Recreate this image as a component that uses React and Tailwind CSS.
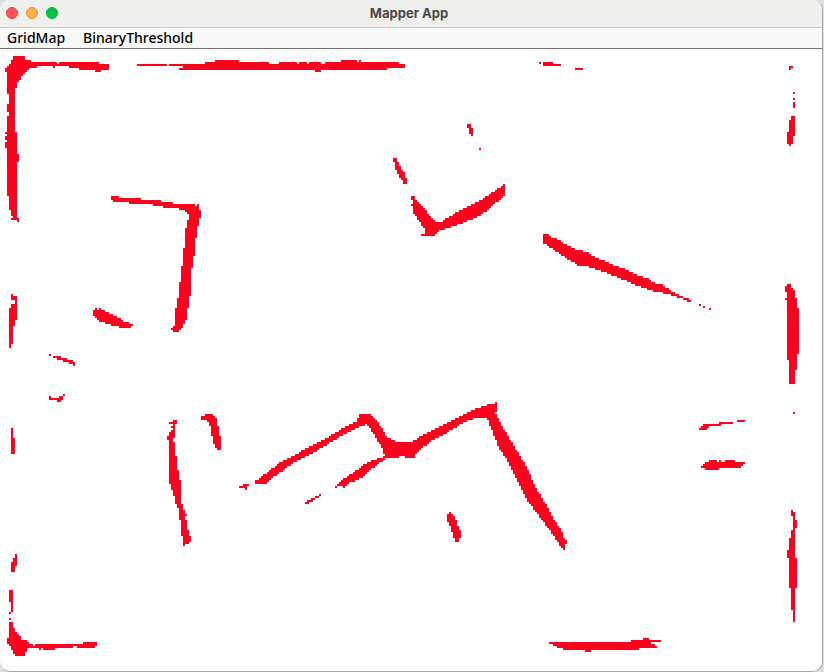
import React from "react";

const CELL = 2;
const ORIGIN_X = 1;
const ORIGIN_Y = 50;

const SPANS = [
  // north-west corner and west wall
  [56, 60, 13, 25], [60, 62, 11, 31], [62, 64, 11, 57], [62, 64, 59, 99], [64, 66, 9, 109],
  [66, 68, 7, 37], [66, 68, 53, 55], [66, 68, 69, 109], [68, 70, 5, 29], [68, 70, 79, 109],
  [70, 72, 5, 27], [70, 72, 95, 101], [72, 74, 7, 25], [74, 76, 7, 23], [76, 80, 7, 21],
  [80, 82, 7, 19], [82, 88, 7, 17], [88, 94, 7, 15], [94, 104, 9, 15], [104, 112, 7, 15],
  [112, 116, 9, 15], [116, 132, 7, 15], [132, 196, 7, 17], [132, 134, 5, 7], [136, 140, 5, 7],
  [142, 148, 5, 7], [154, 162, 17, 19], [196, 210, 9, 17], [210, 216, 11, 17],
  [216, 218, 13, 17], [218, 220, 11, 19], [220, 222, 17, 19],
  // north wall
  [64, 66, 137, 167], [60, 62, 215, 239], [60, 62, 341, 357], [60, 62, 359, 361],
  [62, 64, 205, 269], [62, 64, 279, 297], [62, 64, 299, 307], [62, 64, 309, 321],
  [62, 64, 325, 399], [64, 66, 169, 405], [66, 68, 183, 405], [68, 70, 179, 387],
  [70, 72, 315, 321], [62, 64, 539, 541], [62, 64, 543, 553], [64, 66, 543, 561],
  [68, 70, 575, 583], [66, 68, 789, 793], [68, 70, 789, 791],
  // upper centre fragments
  [124, 128, 467, 471], [128, 134, 469, 473], [134, 136, 471, 473], [148, 150, 479, 481],
  [158, 162, 393, 397], [162, 166, 395, 399], [166, 170, 395, 401], [170, 172, 397, 403],
  [172, 174, 397, 405], [174, 178, 399, 405], [178, 180, 401, 405], [178, 184, 403, 407],
  [204, 206, 411, 415],
  // tip of the long diagonal
  [290, 294, 663, 671], [292, 294, 665, 675], [294, 296, 671, 679], [296, 298, 677, 683],
  [298, 300, 683, 689], [300, 302, 687, 691], [304, 306, 699, 701], [306, 308, 703, 705],
  [308, 310, 709, 711],
  // east wall, upper part
  [92, 94, 793, 795], [98, 100, 793, 795], [102, 108, 793, 795], [116, 120, 791, 795],
  [120, 132, 789, 795], [132, 136, 787, 795], [136, 144, 787, 793], [144, 146, 789, 791],
  [284, 286, 787, 791], [286, 288, 785, 791], [288, 290, 785, 793], [290, 292, 785, 795],
  [292, 298, 787, 795], [298, 300, 785, 797], [300, 308, 787, 797], [308, 354, 787, 799],
  [354, 360, 787, 797], [360, 370, 789, 797], [370, 384, 789, 795],
  // box corner on the left
  [196, 198, 111, 119], [198, 200, 111, 141], [200, 202, 113, 161], [202, 204, 129, 173],
  [204, 206, 153, 195], [204, 206, 197, 199], [206, 208, 163, 199], [208, 210, 179, 199],
  [210, 212, 185, 201], [212, 214, 187, 201], [214, 218, 189, 201], [218, 220, 189, 199],
  [220, 226, 187, 199], [226, 228, 187, 197], [228, 238, 185, 197], [238, 248, 185, 195],
  [248, 256, 183, 195], [256, 266, 183, 193], [266, 268, 181, 193], [268, 282, 181, 191],
  [282, 296, 179, 191], [296, 298, 179, 189], [298, 308, 177, 189], [308, 320, 175, 187],
  [320, 324, 175, 185], [324, 326, 175, 183], [326, 328, 173, 183], [328, 330, 171, 181],
  [330, 332, 173, 179],
  // west wall, middle
  [294, 296, 11, 13], [296, 300, 11, 17], [300, 304, 15, 17], [304, 308, 11, 17],
  [308, 320, 9, 17], [320, 326, 9, 15], [326, 344, 9, 13], [344, 348, 9, 11],
  [308, 310, 95, 97], [308, 310, 99, 101], [310, 312, 93, 105], [312, 314, 93, 109],
  [314, 316, 93, 113], [316, 318, 95, 117], [318, 320, 97, 121], [320, 322, 99, 123],
  [322, 324, 105, 129], [324, 326, 111, 133], [326, 328, 119, 131],
  [354, 356, 49, 51], [356, 358, 53, 61], [358, 360, 57, 67], [360, 362, 63, 73],
  [362, 364, 69, 75], [364, 366, 73, 75], [394, 396, 63, 65], [396, 398, 49, 51],
  [396, 398, 59, 63], [398, 400, 49, 63], [400, 402, 57, 61],
  // lower left strokes
  [420, 422, 173, 177], [422, 424, 169, 177], [424, 426, 173, 175], [426, 428, 171, 175],
  [428, 430, 173, 175], [430, 432, 171, 175], [432, 436, 169, 175], [436, 438, 167, 175],
  [438, 440, 167, 173], [440, 442, 169, 173], [442, 456, 169, 175], [456, 470, 169, 177],
  [470, 480, 169, 179], [480, 484, 169, 181], [484, 490, 171, 181], [490, 496, 173, 181],
  [496, 502, 175, 181], [502, 504, 175, 181], [504, 508, 177, 183], [508, 510, 179, 183],
  [510, 514, 179, 185], [514, 516, 179, 187], [516, 520, 179, 185], [520, 530, 181, 187],
  [530, 536, 181, 189], [536, 542, 183, 191], [542, 544, 183, 189], [544, 546, 183, 185],
  [414, 416, 205, 213], [416, 418, 201, 215], [418, 420, 201, 217], [420, 422, 207, 217],
  [422, 426, 209, 217], [426, 436, 211, 219], [436, 444, 213, 221], [444, 448, 215, 221],
  [448, 450, 217, 221], [484, 486, 243, 249], [486, 488, 239, 247], [488, 490, 245, 247],
  [494, 496, 319, 321], [496, 498, 315, 319], [498, 500, 311, 315], [500, 502, 307, 313],
  [502, 504, 305, 309], [486, 488, 335, 337], [486, 488, 343, 345],
  [512, 514, 449, 451], [514, 516, 447, 453], [516, 520, 447, 455], [520, 522, 447, 457],
  [522, 526, 449, 457], [526, 530, 451, 459], [530, 532, 451, 461], [532, 538, 453, 461],
  [538, 540, 455, 459], [540, 542, 455, 459],
  // east wall, lower part
  [420, 422, 737, 745], [422, 424, 719, 733], [424, 426, 703, 721], [426, 428, 701, 709],
  [428, 430, 699, 707], [412, 414, 793, 795], [460, 462, 709, 717], [460, 462, 719, 721],
  [460, 462, 725, 735], [462, 464, 705, 745], [464, 466, 703, 743], [466, 468, 701, 741],
  [468, 470, 705, 719], [510, 512, 791, 793], [512, 516, 791, 795], [516, 520, 793, 795],
  [520, 528, 793, 797], [528, 530, 793, 795], [530, 538, 791, 795], [538, 550, 789, 795],
  [550, 558, 787, 795], [558, 588, 789, 797], [588, 610, 791, 795], [610, 622, 793, 795],
  // south-west corner
  [428, 438, 11, 13], [438, 454, 11, 15], [554, 558, 15, 17], [558, 562, 13, 17],
  [562, 566, 11, 17], [566, 572, 11, 15], [590, 602, 9, 13], [602, 612, 11, 13],
  [612, 614, 9, 11], [618, 620, 9, 11], [622, 628, 9, 13], [628, 632, 9, 15],
  [632, 634, 9, 17], [634, 636, 9, 19], [636, 638, 9, 21], [638, 640, 7, 21],
  [640, 642, 7, 27], [642, 644, 7, 29], [642, 644, 83, 97], [644, 646, 9, 33],
  [644, 646, 35, 97], [646, 648, 11, 73], [646, 648, 77, 95], [648, 650, 11, 27],
  [648, 650, 39, 41], [648, 650, 43, 55], [650, 652, 13, 27], [652, 654, 13, 25],
  [654, 656, 15, 25],
  // south wall
  [638, 640, 643, 649], [640, 642, 631, 661], [642, 644, 549, 651], [644, 646, 553, 655],
  [646, 648, 557, 657], [648, 650, 563, 639], [650, 652, 585, 591],
];

// Slanted walls, stored as outlines and sampled onto the grid
const OUTLINES = [
  [[411, 196], [415, 196], [416, 200], [427, 212], [435, 222], [441, 222], [461, 210], [480, 201], [505, 184], [505, 194], [502, 198], [480, 216], [463, 223], [441, 230], [434, 236], [421, 236], [421, 234], [424, 234], [424, 228], [413, 212], [413, 202], [411, 200]],
  [[543, 234], [549, 234], [551, 237], [557, 239], [563, 243], [569, 246], [575, 249], [582, 251], [588, 253], [597, 258], [607, 262], [615, 266], [627, 270], [637, 275], [647, 278], [655, 283], [663, 285], [672, 292], [655, 292], [643, 288], [633, 284], [619, 278], [609, 274], [595, 269], [589, 267], [579, 266], [571, 261], [560, 254], [543, 243]],
  [[255, 482], [257, 480], [265, 474], [273, 468], [281, 462], [291, 457], [300, 452], [320, 442], [340, 430], [357, 421], [359, 416], [361, 414], [369, 414], [374, 418], [382, 428], [387, 437], [395, 441], [402, 443], [411, 442], [420, 437], [440, 427], [460, 417], [475, 409], [487, 405], [495, 404], [495, 402], [497, 402], [497, 411], [495, 412], [500, 423], [512, 443], [525, 464], [535, 486], [545, 503], [553, 518], [561, 530], [565, 540], [567, 542], [567, 544], [565, 545], [565, 550], [563, 550], [555, 538], [545, 524], [533, 508], [527, 500], [515, 476], [507, 460], [500, 450], [494, 436], [487, 418], [475, 418], [465, 422], [450, 431], [430, 442], [415, 454], [414, 458], [405, 458], [405, 456], [398, 456], [398, 458], [385, 458], [381, 446], [370, 428], [366, 425], [361, 426], [340, 437], [320, 449], [307, 456], [293, 463], [283, 471], [271, 479], [265, 484], [255, 484]],
  [[388, 456], [383, 457], [374, 460], [365, 464], [357, 470], [345, 478], [337, 484], [337, 486], [345, 487], [350, 483], [363, 477], [373, 468], [381, 462]],
];

function sampleOutline(points) {
  const runs = [];
  const ys = points.map((p) => p[1]);
  const bottom = Math.max(...ys);
  const start = ORIGIN_Y + Math.floor((Math.min(...ys) - ORIGIN_Y) / CELL) * CELL;
  for (let y = start; y < bottom; y += CELL) {
    const mid = y + CELL / 2 + 0.01;
    const hits = [];
    points.forEach(([x1, y1], i) => {
      const [x2, y2] = points[(i + 1) % points.length];
      if (y1 > mid !== y2 > mid) hits.push(x1 + ((mid - y1) / (y2 - y1)) * (x2 - x1));
    });
    hits.sort((a, b) => a - b);
    for (let i = 0; i + 1 < hits.length; i += 2) {
      const left = ORIGIN_X + Math.round((hits[i] - ORIGIN_X) / CELL) * CELL;
      const right = ORIGIN_X + Math.round((hits[i + 1] - ORIGIN_X) / CELL) * CELL;
      runs.push([y, y + CELL, left, Math.max(right, left + CELL)]);
    }
  }
  return runs;
}

const MAP_PATH = [...SPANS, ...OUTLINES.flatMap(sampleOutline)]
  .map(([top, bottom, left, right]) => `M${left} ${top}H${right}V${bottom}H${left}Z`)
  .join("");

function TitleBar() {
  return (
    <header className="relative flex h-7 items-center justify-center border-b border-[#cbcbcb] bg-[#efefed] pr-1 pb-px">
      <div className="absolute left-1.5 flex gap-2">
        <button aria-label="Close" className="size-3 rounded-full border border-[#e0444b] bg-[#ff5157]" />
        <button aria-label="Minimize" className="size-3 rounded-full border border-[#dd9638] bg-[#ffb045]" />
        <button aria-label="Zoom" className="size-3 rounded-full border border-[#06ab3c] bg-[#05c548]" />
      </div>
      <h1 className="font-[Inter,sans-serif] text-[13px] leading-4 font-bold text-[#494947]">Mapper App</h1>
    </header>
  );
}

function MenuBar() {
  return (
    <nav className="flex h-[21px] items-center gap-[18px] border-b border-[#737373] bg-[#f9f9f9] pl-[7px] font-['Noto_Sans',sans-serif] text-sm leading-5 font-medium text-black">
      <button>GridMap</button>
      <button>BinaryThreshold</button>
    </nav>
  );
}

export default function App() {
  return (
    <div className="min-h-screen bg-[#dedede] pr-px">
      <div className="flex min-h-screen flex-col overflow-hidden rounded-[10px] border-r border-b border-[#a5a8a8] bg-white">
        <TitleBar />
        <MenuBar />
        <main className="flex-1">
          <svg
            role="img"
            aria-label="Occupancy grid map"
            viewBox="0 49 822 621"
            shapeRendering="crispEdges"
            className="block w-full"
          >
            <path d={MAP_PATH} fill="#ff001e" />
          </svg>
        </main>
      </div>
    </div>
  );
}
